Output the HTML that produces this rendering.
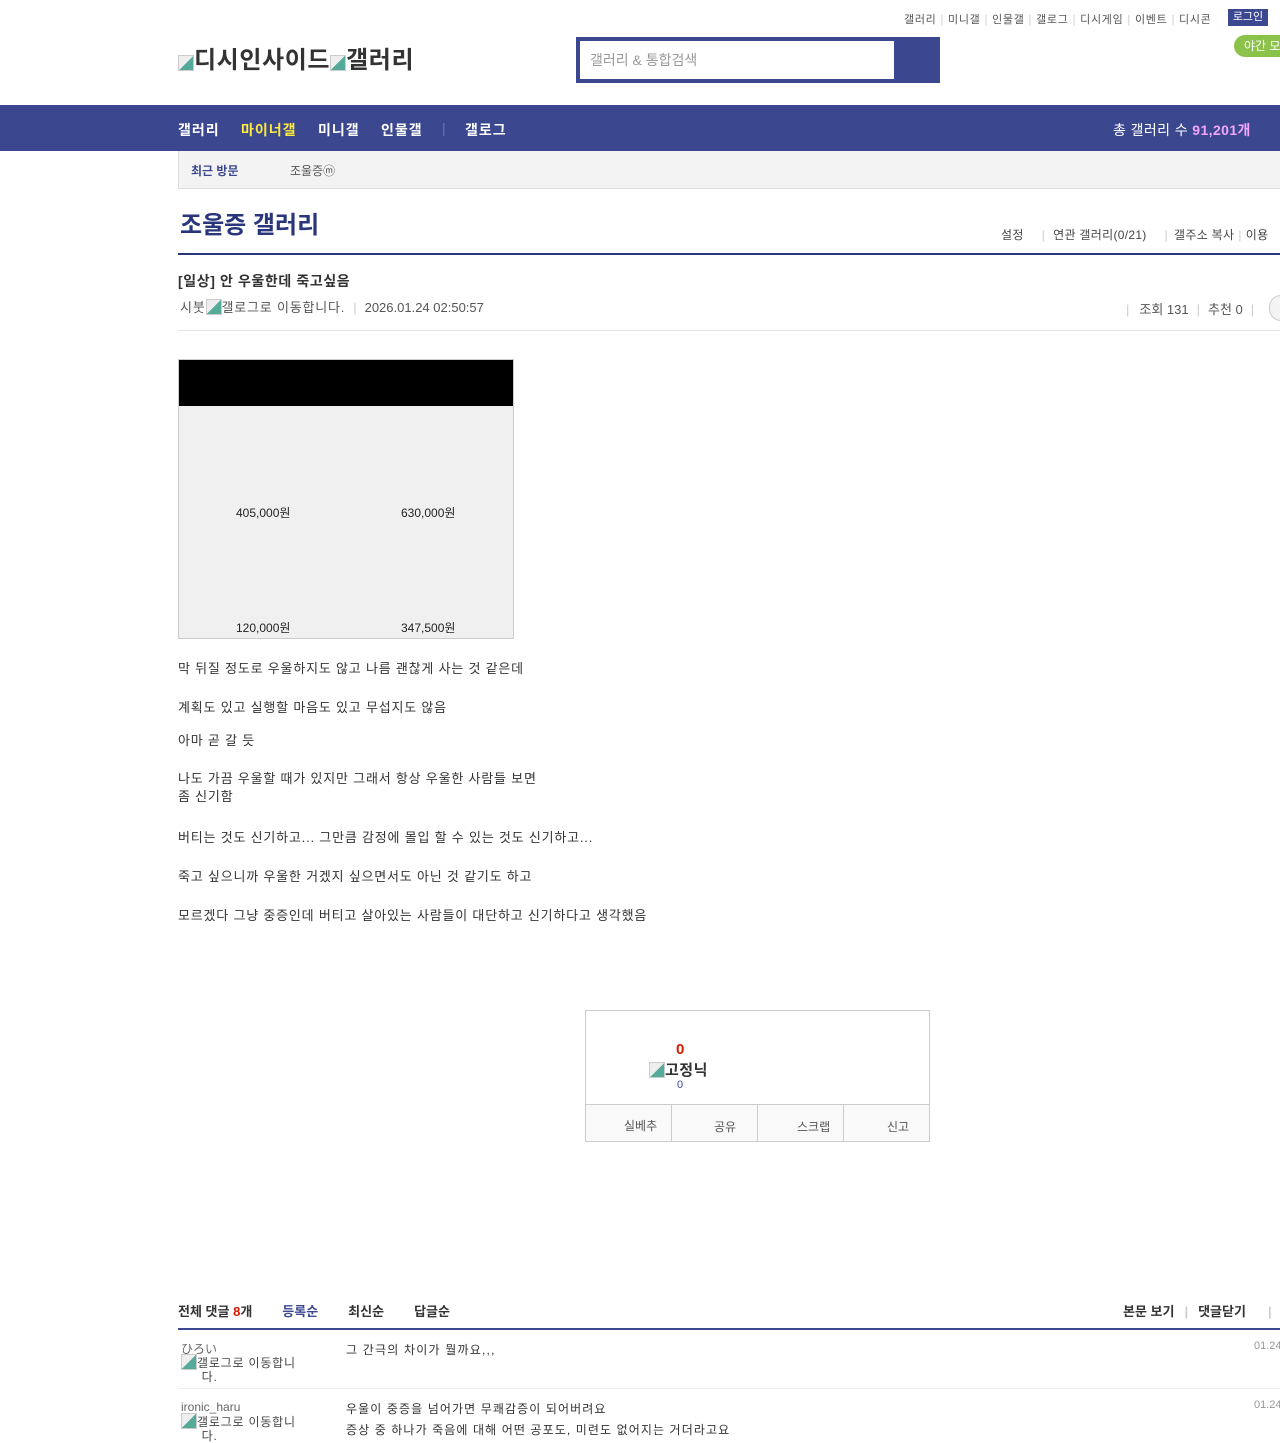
<!DOCTYPE html>
<html><head><meta charset="utf-8"><style>
body{margin:0;width:1280px;height:1434px;overflow:hidden;position:relative;background:#fff;font-family:"Liberation Sans","Noto Sans CJK KR",sans-serif;color:#333}
.a{position:absolute;white-space:nowrap}
.sep{color:#ccc;margin:0 4px}
.img{display:inline-block;width:16px;height:16px;vertical-align:-3px;background:linear-gradient(135deg,#eee 50%,#5a9 50%);border:1px solid #ccc;box-sizing:border-box}
.body{letter-spacing:0.8px}
.nav{position:absolute;top:120px;font-size:14px;font-weight:bold;color:#fff;letter-spacing:1px}
</style></head><body>
<div class="a" style="top:11px;left:904px;font-size:11px;color:#555;letter-spacing:0.7px">갤러리<span class="sep">|</span>미니갤<span class="sep">|</span>인물갤<span class="sep">|</span>갤로그<span class="sep">|</span>디시게임<span class="sep">|</span>이벤트<span class="sep">|</span>디시콘</div>
<div class="a" style="top:9px;left:1228px;width:40px;height:17px;background:#3b4890;color:#fff;font-size:11px;line-height:17px;text-align:center">로그인</div>
<div class="a" style="top:35px;left:1234px;width:60px;height:22px;border-radius:11px;background:#8bc34a;color:#fff;font-size:12px;line-height:22px;padding-left:10px">야간 모드</div>
<div class="a" style="top:40px;left:178px;font-size:24px;font-weight:bold;color:#333;letter-spacing:0.6px"><span class="img"></span>디시인사이드<span class="img"></span>갤러리</div>
<div class="a" style="top:37px;left:576px;width:364px;height:46px;background:#3b4890"></div>
<div class="a" style="top:41px;left:580px;width:314px;height:38px;background:#fff;font-size:14px;color:#999;line-height:38px;padding-left:10px;box-sizing:border-box">갤러리 &amp; 통합검색</div>
<div class="a" style="top:105px;left:0;width:1280px;height:46px;background:#3b4890"></div>
<div class="nav" style="left:178px">갤러리</div>
<div class="nav" style="left:241px;color:#ffeb3b">마이너갤</div>
<div class="nav" style="left:318px">미니갤</div>
<div class="nav" style="left:381px">인물갤</div>
<div class="nav" style="left:442px;color:#6a76b0;font-weight:normal">|</div>
<div class="nav" style="left:465px">갤로그</div>
<div class="a" style="top:120px;left:1113px;font-size:14px;color:#fff;letter-spacing:0.4px">총 갤러리 수 <b style="color:#f4a6ff">91,201개</b></div>
<div class="a" style="top:151px;left:178px;width:1102px;height:37px;background:#f3f3f3;border-bottom:1px solid #ddd"></div>
<div class="a" style="top:151px;left:178px;width:1px;height:38px;background:#ddd"></div>
<div class="a" style="top:162px;left:191px;font-size:12px;font-weight:bold;color:#3b4890">최근 방문</div>
<div class="a" style="top:162px;left:290px;font-size:12px;color:#555">조울증ⓜ</div>
<div class="a" style="top:205px;left:180px;font-size:24px;font-weight:bold;color:#29367c">조울증 갤러리</div>
<div class="a" style="top:226px;left:1001px;font-size:12px;color:#444;letter-spacing:0.3px">설정<span class="sep" style="margin:0 8px 0 18px">|</span>연관 갤러리(0/21)<span class="sep" style="margin:0 6px 0 18px">|</span>갤주소 복사<span class="sep">|</span>이용</div>
<div class="a" style="top:253px;left:178px;width:1102px;height:2px;background:#29367c"></div>
<div class="a" style="top:271px;left:178px;font-size:14px;font-weight:bold;color:#333;letter-spacing:0.6px">[일상] 안 우울한데 죽고싶음</div>
<div class="a" style="top:297px;left:180px;font-size:13px;color:#555"><span style="letter-spacing:0.8px">시붓<span class="img"></span>갤로그로 이동합니다.</span><span class="sep" style="margin:0 8px">|</span>2026.01.24 02:50:57</div>
<div class="a" style="top:299px;left:1126px;font-size:13px;color:#555"><span class="sep" style="margin:0 10px 0 0">|</span>조회 131<span class="sep" style="margin:0 8px">|</span>추천 0<span class="sep" style="margin:0 8px">|</span></div>
<div class="a" style="top:295px;left:1269px;width:24px;height:24px;border-radius:12px;border:1px solid #ccc;background:#f3f3f3"></div>
<div class="a" style="top:330px;left:178px;width:1102px;height:1px;background:#e5e5e5"></div>
<div class="a" style="top:359px;left:178px;width:334px;height:278px;background:#f0f0f0;border:1px solid #ccc"></div>
<div class="a" style="top:360px;left:179px;width:334px;height:46px;background:#000"></div>
<div class="a" style="top:504px;left:236px;font-size:12px;color:#222">405,000원</div>
<div class="a" style="top:504px;left:401px;font-size:12px;color:#222">630,000원</div>
<div class="a" style="top:619px;left:236px;font-size:12px;color:#222">120,000원</div>
<div class="a" style="top:619px;left:401px;font-size:12px;color:#222">347,500원</div>
<div class="a body" style="top:659px;left:178px;font-size:13px;line-height:20px;color:#333">막 뒤질 정도로 우울하지도 않고 나름 괜찮게 사는 것 같은데</div>
<div class="a body" style="top:698px;left:178px;font-size:13px;line-height:20px">계획도 있고 실행할 마음도 있고 무섭지도 않음</div>
<div class="a body" style="top:731px;left:178px;font-size:13px;line-height:20px">아마 곧 갈 듯</div>
<div class="a body" style="top:770px;left:178px;font-size:13px;line-height:18px">나도 가끔 우울할 때가 있지만 그래서 항상 우울한 사람들 보면<br>좀 신기함</div>
<div class="a body" style="top:828px;left:178px;font-size:13px;line-height:20px">버티는 것도 신기하고... 그만큼 감정에 몰입 할 수 있는 것도 신기하고...</div>
<div class="a body" style="top:867px;left:178px;font-size:13px;line-height:20px">죽고 싶으니까 우울한 거겠지 싶으면서도 아닌 것 같기도 하고</div>
<div class="a body" style="top:906px;left:178px;font-size:13px;line-height:20px">모르겠다 그냥 중증인데 버티고 살아있는 사람들이 대단하고 신기하다고 생각했음</div>
<div class="a" style="top:1010px;left:585px;width:343px;height:130px;border:1px solid #ccc"></div>
<div class="a" style="top:1104px;left:586px;width:343px;height:36px;background:#f9f9f9;border-top:1px solid #ccc"></div>
<div class="a" style="top:1104px;left:671px;width:1px;height:37px;background:#ccc"></div>
<div class="a" style="top:1104px;left:757px;width:1px;height:37px;background:#ccc"></div>
<div class="a" style="top:1104px;left:843px;width:1px;height:37px;background:#ccc"></div>
<div class="a" style="top:1117px;left:624px;font-size:12px;color:#555">실베추</div>
<div class="a" style="top:1118px;left:714px;font-size:12px;color:#555">공유</div>
<div class="a" style="top:1118px;left:797px;font-size:12px;color:#555">스크랩</div>
<div class="a" style="top:1118px;left:887px;font-size:12px;color:#555">신고</div>
<div class="a" style="top:1041px;left:676px;font-size:15px;font-weight:bold;color:#d31900">0</div>
<div class="a" style="top:1059px;left:649px;font-size:15px;font-weight:bold;color:#333;letter-spacing:0.5px"><span class="img"></span>고정닉</div>
<div class="a" style="top:1079px;left:677px;font-size:11px;color:#3b4890">0</div>
<div class="a" style="top:1301px;left:178px;font-size:13px;font-weight:bold;color:#333">전체 댓글 <span style="color:#d31900">8</span>개<span style="color:#3b4890;margin-left:30px">등록순</span><span style="margin-left:30px">최신순</span><span style="margin-left:30px">답글순</span></div>
<div class="a" style="top:1301px;left:1123px;font-size:13px;font-weight:bold;color:#333">본문 보기<span class="sep" style="margin:0 10px">|</span>댓글닫기<span class="sep" style="margin:0 0 0 22px">|</span></div>
<div class="a" style="top:1328px;left:178px;width:1102px;height:2px;background:#3b4890"></div>
<div class="a" style="top:1340px;left:181px;font-size:12px;color:#666">ひろい</div>
<div class="a" style="top:1354px;left:181px;font-size:12px;line-height:14px;color:#444;letter-spacing:0.8px"><span class="img"></span>갤로그로 이동합니<br>&nbsp;&nbsp;&nbsp;&nbsp;&nbsp;다.</div>
<div class="a" style="top:1341px;left:346px;font-size:12px;color:#333;letter-spacing:1.2px">그 간극의 차이가 뭘까요,,,</div>
<div class="a" style="top:1340px;left:1254px;font-size:11px;color:#999">01.24</div>
<div class="a" style="top:1388px;left:178px;width:1102px;height:1px;background:#eee"></div>
<div class="a" style="top:1400px;left:181px;font-size:12px;color:#666">ironic_haru</div>
<div class="a" style="top:1413px;left:181px;font-size:12px;line-height:14px;color:#444;letter-spacing:0.8px"><span class="img"></span>갤로그로 이동합니<br>&nbsp;&nbsp;&nbsp;&nbsp;&nbsp;다.</div>
<div class="a" style="top:1399px;left:346px;font-size:12px;line-height:21px;color:#333;letter-spacing:1.1px">우울이 중증을 넘어가면 무쾌감증이 되어버려요<br>증상 중 하나가 죽음에 대해 어떤 공포도, 미련도 없어지는 거더라고요</div>
<div class="a" style="top:1399px;left:1254px;font-size:11px;color:#999">01.24</div>
</body></html>
